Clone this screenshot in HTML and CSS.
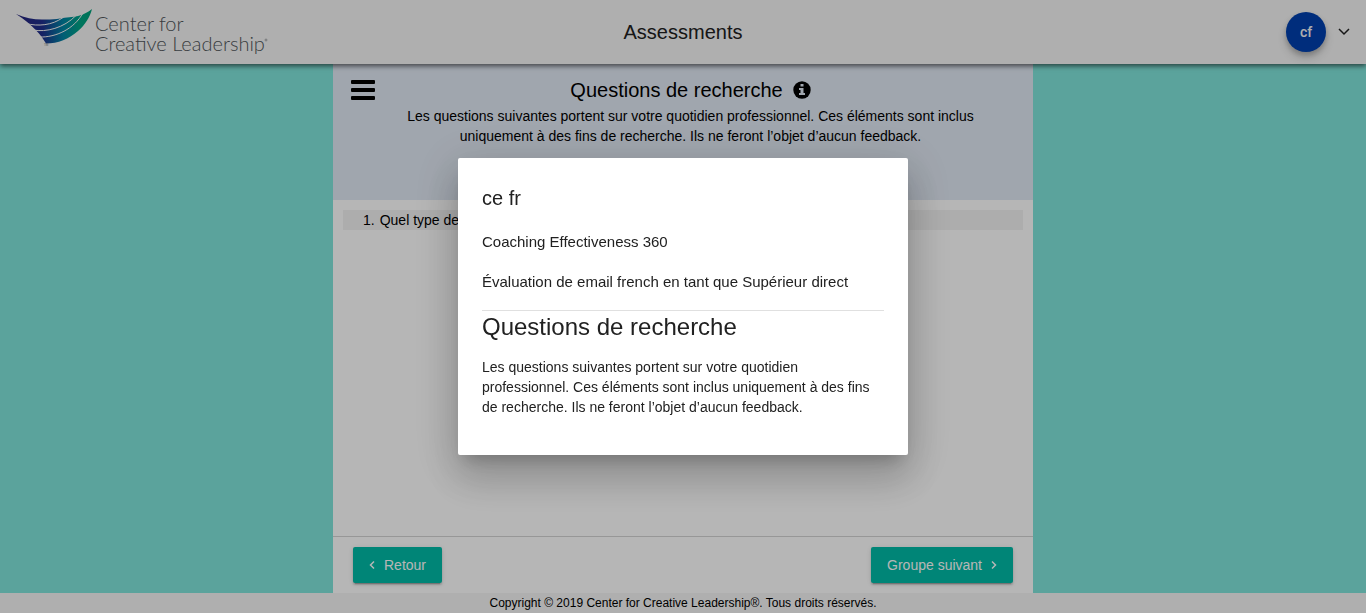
FILE: index.html
```html
<!DOCTYPE html>
<html lang="fr">
<head>
<meta charset="utf-8">
<meta name="viewport" content="width=device-width, initial-scale=1">
<title>Assessments</title>
<link rel="stylesheet" href="styles.css">
</head>
<body>
<div class="app">
  <header class="topbar">
    <a class="brand" href="#" aria-label="Center for Creative Leadership">
      <svg class="brand-logo" viewBox="0 0 252 50" role="img" aria-hidden="true">
        <defs>
          <linearGradient id="wing" x1="0" y1="0" x2="1" y2="0">
            <stop offset="0" stop-color="#27237c"/>
            <stop offset=".35" stop-color="#1f2f8c"/>
            <stop offset=".62" stop-color="#0084a4"/>
            <stop offset=".85" stop-color="#00a584"/>
            <stop offset="1" stop-color="#00a078"/>
          </linearGradient>
        </defs>
        <path fill="url(#wing)" d="M0 7C9 11 17 12.500 26 12.500C33 12.800 39 12.300 44 11.500C50 10.500 57 10.300 62 9C68 7.500 72 5 76 2C74 10 69 18 62 24C53 32 42 36.500 30 36.500C25 28 17 18 0 7Z"/>
        <path fill="none" stroke="#f5f5f5" stroke-width="1" d="M10 16.500C22 19.500 36 18.500 47 10.500M17 23C30 25.500 48 21 60 8.500M23.500 30C40 30.500 58 22 67 6"/>
        <text class="brand-tm" x="28" y="39">TM</text>
        <text class="brand-text" x="79" y="24">Center for</text>
        <text class="brand-text" x="79" y="44">Creative Leadership</text>
        <circle cx="250" cy="33" r="1" fill="none" stroke="#777c80" stroke-width=".6"/>
      </svg>
    </a>
    <h1 class="app-title">Assessments</h1>
    <button class="account" type="button" aria-label="Compte">
      <span class="avatar">cf</span>
      <svg class="chevron" viewBox="0 0 12 8" aria-hidden="true"><path d="M1 1l5 5 5-5"/></svg>
    </button>
  </header>

  <main class="sheet">
    <section class="intro">
      <button class="menu" type="button" aria-label="Menu">
        <svg viewBox="0 0 24 20" aria-hidden="true"><rect width="24" height="4" rx="1"/><rect y="8" width="24" height="4" rx="1"/><rect y="16" width="24" height="4" rx="1"/></svg>
      </button>
      <div class="intro-body">
        <h2 class="intro-title">Questions de recherche
          <button class="info" type="button" aria-label="Information">
            <svg viewBox="0 0 18 18" aria-hidden="true"><circle cx="9" cy="9" r="8.700"/><path fill="#e1e9f4" d="M7.500 3h3v2.500h-3zM6 7h4.500v5H12v2H6v-2h1.500V9H6z"/></svg>
          </button>
        </h2>
        <p class="intro-text">Les questions suivantes portent sur votre quotidien professionnel. Ces éléments sont inclus uniquement à des fins de recherche. Ils ne feront l’objet d’aucun feedback.</p>
      </div>
    </section>
    <section class="questions">
      <ol class="question-list"><li class="question"><span>1.</span><span>Quel type de</span></li></ol>
    </section>
    <nav class="actions">
      <button class="action" type="button"><svg viewBox="0 0 6 10" aria-hidden="true"><path d="M5 1.500L1.500 5 5 8.500"/></svg>Retour</button>
      <button class="action" type="button">Groupe suivant<svg viewBox="0 0 6 10" aria-hidden="true"><path d="M1 1.500L4.500 5 1 8.500"/></svg></button>
    </nav>
  </main>
  <footer class="footer">Copyright © 2019 Center for Creative Leadership®. Tous droits réservés.</footer>
</div>

<div class="backdrop">
  <div class="dialog" role="dialog" aria-modal="true" aria-labelledby="dialog-title">
    <h2 class="dialog-name" id="dialog-title">ce fr</h2>
    <p class="dialog-line">Coaching Effectiveness 360</p>
    <p class="dialog-line">Évaluation de email french en tant que Supérieur direct</p>
    <hr class="divider">
    <h3 class="dialog-heading">Questions de recherche</h3>
    <p class="dialog-text">Les questions suivantes portent sur votre quotidien professionnel. Ces éléments sont inclus uniquement à des fins de recherche. Ils ne feront l’objet d’aucun feedback.</p>
  </div>
</div>
</body>
</html>
```
FILE: styles.css
```css
* { box-sizing: border-box; }
body {
  margin: 0;
  font: 14px/20px "Liberation Sans", Arial, sans-serif;
  color: #000;
}
h1, h2, h3, p, ol { margin: 0; padding: 0; font-weight: 400; }
button { border: 0; padding: 0; background: none; font: inherit; color: inherit; cursor: pointer; }
svg { display: block; }

.app { min-height: 100vh; display: flex; flex-direction: column; background: #80e5db; }
.topbar {
  position: relative;
  display: grid;
  grid-template-columns: 1fr auto 1fr;
  align-items: center;
  height: 64px;
  padding: 0 16px;
  background: #f5f5f5;
  box-shadow: 0 2px 5px rgba(0, 0, 0, .6);
}
.brand { justify-self: start; }
.brand-logo { width: 252px; height: 50px; overflow: visible; }
.brand-text { font: 300 20px "Lato", sans-serif; fill: #50565a; }
.brand-tm { font: 3px "Liberation Sans", sans-serif; fill: #777c80; }
.app-title { font-size: 20px; line-height: 32px; color: #212121; }
.account { justify-self: end; display: flex; align-items: center; gap: 12px; }
.avatar {
  width: 40px; height: 40px; border-radius: 50%;
  background: #0040ae; color: #f5f5f5;
  font-family: "Roboto", sans-serif; font-weight: 500; line-height: 40px;
  box-shadow: 0 3px 5px rgba(0, 0, 0, .2), 0 6px 10px rgba(0, 0, 0, .14);
}
.chevron { width: 12px; height: 8px; fill: none; stroke: #212121; stroke-width: 1.5; }

.sheet { width: 100%; max-width: 700px; margin: 0 auto; flex: 1; display: flex; flex-direction: column; background: #fff; }
.intro {
  display: grid;
  grid-template-columns: 60px 1fr 45px;
  align-items: start;
  min-height: 136px;
  padding-top: 16px;
  background: #e1e9f4;
}
.menu { width: 24px; margin-left: 18px; }
.intro-body { text-align: center; }
.intro-title { display: flex; justify-content: center; align-items: center; gap: 10px; font-size: 20px; line-height: 20px; }
.info { width: 18px; height: 18px; }
.intro-text { margin-top: 6px; }
.questions { flex: 1; padding: 10px; }
.question-list { list-style: none; }
.question { display: flex; gap: 5px; padding-left: 20px; background: #f3f3f3; }
.actions { display: flex; justify-content: space-between; padding: 10px 20px; border-top: 1px solid #d4d4d4; }
.action {
  display: flex; align-items: center; gap: 9px;
  height: 36px; padding: 0 16px; border-radius: 2px;
  background: #00bba7; color: #fff;
  box-shadow: 0 3px 1px -2px rgba(0, 0, 0, .2), 0 2px 2px rgba(0, 0, 0, .14), 0 1px 5px rgba(0, 0, 0, .12);
}
.action svg { width: 6px; height: 10px; fill: none; stroke: #fff; stroke-width: 1.5; }
.footer { background: #f5f5f5; font-size: 12px; line-height: 20px; text-align: center; }

.backdrop { position: fixed; inset: 0; display: flex; align-items: center; justify-content: center; background: rgba(0, 0, 0, .288); }
.dialog {
  width: 450px; max-width: 80vw; padding: 24px;
  border-radius: 2px; background: #fff; color: #212121;
  box-shadow: 0 11px 15px -7px rgba(0, 0, 0, .2), 0 24px 38px 3px rgba(0, 0, 0, .14), 0 9px 46px 8px rgba(0, 0, 0, .12);
}
.dialog-name { margin-bottom: 16px; font-size: 20px; line-height: 32px; }
.dialog-line { margin-bottom: 16px; font-size: 15px; line-height: 24px; }
.divider { margin: 0; border: 0; border-top: 1px solid #e0e0e0; }
.dialog-heading { font-size: 24px; line-height: 32px; }
.dialog-text { margin: 14px 0; }
```
